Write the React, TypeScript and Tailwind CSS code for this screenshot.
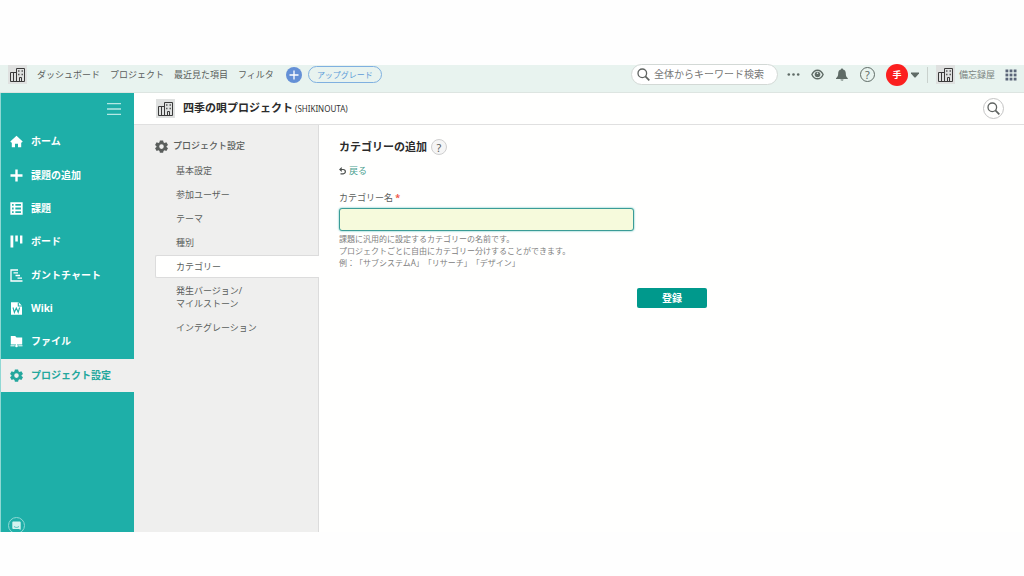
import { useState, type ReactNode } from "react";

type NavItem = { label: string; icon: ReactNode };

const globalLinks = ["ダッシュボード", "プロジェクト", "最近見た項目", "フィルタ"];

const projectNav: NavItem[] = [
  { label: "ホーム", icon: <HomeIcon /> },
  { label: "課題の追加", icon: <AddIcon /> },
  { label: "課題", icon: <IssuesIcon /> },
  { label: "ボード", icon: <BoardIcon /> },
  { label: "ガントチャート", icon: <GanttIcon /> },
  { label: "Wiki", icon: <WikiIcon /> },
  { label: "ファイル", icon: <FileIcon /> },
  { label: "プロジェクト設定", icon: <GearIcon /> },
];

const settingsNav = [
  "基本設定",
  "参加ユーザー",
  "テーマ",
  "種別",
  "カテゴリー",
  "発生バージョン/\nマイルストーン",
  "インテグレーション",
];

export default function App() {
  return (
    <div className="flex min-h-screen flex-col bg-[#fefefe] pt-[65px] pb-11 [font-family:'Noto_Sans','Open_Sans','Noto_Sans_CJK_JP',sans-serif] text-[9px] text-[#5a5e5c] [text-spacing-trim:space-all]">
      <GlobalHeader />
      <div className="flex flex-1">
        <Sidebar />
        <div className="flex min-w-0 flex-1 flex-col">
          <ProjectHeader />
          <div className="flex flex-1">
            <SettingsNav />
            <CategoryForm />
          </div>
        </div>
      </div>
    </div>
  );
}

function GlobalHeader() {
  return (
    <header className="flex h-7 items-center border-b border-[#dde5e1] bg-[#e8f3ef] pr-[7px] pb-2 pl-2">
      <Logo />
      <nav className="ml-2.5 flex items-center gap-2.5 whitespace-nowrap">
        {globalLinks.map((label) => (
          <a key={label} href="#">
            {label}
          </a>
        ))}
      </nav>
      <button aria-label="追加" className="ml-3 size-4 shrink-0 rounded-full bg-[#6490d6]">
        <svg viewBox="0 0 16 16" className="size-4" stroke="#fff" strokeWidth="1.3">
          <path d="M8 3.500v9M3.500 8h9" />
        </svg>
      </button>
      <a
        href="#"
        className="ml-1.5 flex h-[17px] items-center rounded-full border border-[#7fb0e0] px-2 text-[8px] whitespace-nowrap text-[#5c9bd8]"
      >
        アップグレード
      </a>

      <label className="ml-auto flex h-[21px] w-[147px] items-center gap-1 rounded-full border border-[#d3d9d6] bg-white pl-[5px]">
        <SearchIcon className="size-[13px] shrink-0" />
        <input
          type="search"
          aria-label="キーワード検索"
          placeholder="全体からキーワード検索"
          className="w-full min-w-0 text-[10px] outline-none placeholder:text-[#777]"
        />
      </label>
      <button aria-label="その他" className="ml-[9px]">
        <svg viewBox="0 0 13 13" className="size-[13px]" fill="#5f6b66">
          <circle cx="1.8" cy="6.5" r="1.3" />
          <circle cx="6.5" cy="6.5" r="1.3" />
          <circle cx="11.2" cy="6.5" r="1.3" />
        </svg>
      </button>
      <button aria-label="ウォッチ" className="ml-[11px]">
        <svg viewBox="0 0 13 13" className="size-[13px]" fill="none" stroke="#5f6b66" strokeWidth="1.4">
          <path d="M.9 6.5C2 4 4 2.200 6.5 2.200S11 4 12.1 6.5C11 9 9 10.800 6.5 10.800S2 9 .9 6.5Z" />
          <circle cx="6.5" cy="6.5" r="2.8" fill="#5f6b66" stroke="none" />
          <circle cx="6.5" cy="5.2" r=".8" fill="#e8f3ef" stroke="none" />
        </svg>
      </button>
      <button aria-label="お知らせ" className="ml-3">
        <svg viewBox="0 0 12 13" className="h-[13px] w-3" fill="#5f6b66">
          <path d="M6 .4c.7 0 1.1.5 1.1 1.1C8.900 2 9.800 3.400 9.800 5.200c0 2.600.5 3.800 2 5v.9H0v-.9c1.500-1.200 2.200-2.400 2.200-5 0-1.800.9-3.200 2.700-3.700C4.900.9 5.300.4 6 .4ZM4.500 11.500h3c-.1.800-.7 1.200-1.500 1.200s-1.400-.4-1.500-1.200Z" />
        </svg>
      </button>
      <button
        aria-label="ヘルプ"
        className="ml-3 flex size-[15px] items-center justify-center rounded-full border border-[#5f6b66] text-[11px] leading-none text-[#5f6b66]"
      >
        ?
      </button>
      <button aria-label="アカウント" className="ml-[11px] flex items-center gap-[3px]">
        <span className="flex size-[22px] items-center justify-center rounded-full bg-[#fb1f1f] font-bold text-white">
          手
        </span>
        <svg viewBox="0 0 8 6" className="h-1.5 w-2" fill="#5f6b66">
          <path d="M0 .5h8v1L4.500 5.500h-1L0 1.500z" />
        </svg>
      </button>
      <span className="mx-2 h-4 w-px bg-[#c9d1cd]" />
      <a href="#" className="flex items-center gap-1 whitespace-nowrap text-[#7b8380]">
        <Logo />
        備忘録屋
      </a>
      <button aria-label="アプリ一覧" className="ml-2.5">
        <svg viewBox="0 0 12 12" className="size-3" fill="#5a6578">
          {[0.5, 4.6, 8.7].map((y) => [0.5, 4.6, 8.7].map((x) => <rect key={`${x}-${y}`} x={x} y={y} width="2.8" height="2.8" />))}
        </svg>
      </button>
    </header>
  );
}

function Sidebar() {
  const [collapsed, setCollapsed] = useState(false);

  return (
    <aside className="flex w-[134px] shrink-0 flex-col overflow-hidden border-l border-[#8fd8d3] bg-[#1eafa8] text-[10px] font-bold text-white">
      <div className="flex h-8 items-center justify-end pr-[13px]">
        <button aria-label="メニュー" aria-expanded={!collapsed} onClick={() => setCollapsed(!collapsed)}>
          <svg viewBox="0 0 14 14" className="size-3.5" stroke="#b5e8e4" strokeWidth="1.3">
            <path d="M0 1.700h14M0 7h14M0 12.300h14" />
          </svg>
        </button>
      </div>
      {!collapsed && (
        <nav className="grid h-[267px] grid-rows-8">
          {projectNav.map(({ label, icon }) => (
            <a
              key={label}
              href="#"
              className={`flex items-center gap-2 pl-[9px] ${label === "プロジェクト設定" ? "bg-[#efefee] text-[#23a79d]" : ""}`}
            >
              {icon}
              {label}
            </a>
          ))}
        </nav>
      )}
      <button
        aria-label="チャット"
        className="mt-auto -mb-0.5 ml-[7px] flex size-[17px] items-center justify-center rounded-full border border-[#8fdad5]"
      >
        <svg viewBox="0 0 9 9" className="size-[9px]">
          <path d="M1.200.5h6.600c.5 0 .9.400.9.900v7.400L6.800 8H1.200C.7 8 .3 7.600.3 7.100V1.400C.3.900.7.500 1.200.5Z" fill="#d3f3f0" />
          <path d="M2 5.500c1.500 1.200 3.500 1.200 5 0" fill="none" stroke="#1eafa8" strokeWidth=".7" />
        </svg>
      </button>
    </aside>
  );
}

function ProjectHeader() {
  return (
    <div className="flex h-8 items-center border-b border-[#e0e0e0] bg-[#fffffe] pr-5 pl-[22px]">
      <Logo />
      <span className="ml-2 text-[11px] font-bold text-[#2b2b2b]">四季の唄プロジェクト</span>
      <span className="ml-0.5 text-[8px] text-[#333]">(SHIKINOUTA)</span>
      <button
        aria-label="検索"
        className="ml-auto flex size-[21px] items-center justify-center rounded-full border border-[#c4c4c4]"
      >
        <SearchIcon className="size-[13px]" />
      </button>
    </div>
  );
}

function SettingsNav() {
  return (
    <div className="w-[185px] shrink-0 border-r border-[#dcdcdc] bg-[#efefee] pt-3 pl-[21px]">
      <h2 className="flex h-[18px] items-center gap-[5px] font-medium">
        <GearIcon />
        プロジェクト設定
      </h2>
      <nav className="mt-1 -mr-px flex flex-col gap-px">
        {settingsNav.map((label) => (
          <a
            key={label}
            href="#"
            className={`rounded-l-xs border-y border-l py-1 pl-5 leading-[13px] whitespace-pre-line ${
              label === "カテゴリー" ? "border-[#dcdcdc] bg-[#fffffe]" : "border-transparent"
            }`}
          >
            {label}
          </a>
        ))}
      </nav>
    </div>
  );
}

function CategoryForm() {
  const [name, setName] = useState("");

  return (
    <main className="min-w-0 flex-1 bg-[#fffffe] pt-3.5 pl-5">
      <div className="flex h-4 items-center gap-1">
        <h1 className="text-[11px] font-bold text-[#2b2b2b]">カテゴリーの追加</h1>
        <button
          aria-label="ヘルプ"
          className="flex size-4 items-center justify-center rounded-full border border-[#cfcfcf] bg-[#f5f5f5] text-[11px] leading-none"
        >
          ?
        </button>
      </div>
      <a href="#" className="mt-2 inline-flex h-4 items-center gap-[3px] text-[#4a9f90]">
        <svg viewBox="0 0 7 8" className="h-2 w-[7px]" fill="none" stroke="#4b4f4d" strokeWidth="1.200">
          <path d="M1 2.500h3.200a2.100 2.100 0 0 1 0 4.300H1.500M2.800.6.900 2.500l1.900 1.900" />
        </svg>
        戻る
      </a>
      <form className="mt-3 flex max-w-[368px] flex-col" onSubmit={(e) => e.preventDefault()}>
        <label htmlFor="category-name" className="leading-[14px]">
          カテゴリー名 <span className="font-bold text-[#f0594a]">*</span>
        </label>
        <input
          id="category-name"
          required
          value={name}
          onChange={(e) => setName(e.target.value)}
          className="mt-[3px] h-[23px] w-full max-w-[295px] rounded-[3px] border border-[#3b9c97] bg-[#f6fadc] px-1.5 shadow-[0_0_2px_#3fb5ae] outline-none"
        />
        <p className="mt-0.5 text-[8px] leading-3 text-[#808080]">
          課題に汎用的に設定するカテゴリーの名前です。
          <br />
          プロジェクトごとに自由にカテゴリー分けすることができます。
          <br />
          例：「サブシステムA」「リサーチ」「デザイン」
        </p>
        <button className="mt-[19px] h-5 w-[70px] self-end rounded-xs bg-[#00998c] text-[10px] leading-none font-bold text-white">
          登録
        </button>
      </form>
    </main>
  );
}

/* Icons */

function Logo() {
  return (
    <span className="flex size-[19px] shrink-0 items-center justify-center bg-[#dfe1e0]">
      <svg viewBox="0 0 17 17" className="size-[17px]" fill="none" stroke="#3a3a3a" strokeWidth="1">
        <path d="M7.500 15.500v-13h8v13h-14v-9h6M4.500 7v2M4.500 9v6M10.500 15.500v-4h2v4" />
        <path d="M9.200 5h1.200M12.600 5h1.200M9.200 8.500h1.200M12.600 8.500h1.200" strokeWidth="1.300" />
      </svg>
    </span>
  );
}

function SearchIcon({ className }: { className: string }) {
  return (
    <svg viewBox="0 0 13 13" className={className} fill="none" stroke="#5f6361" strokeWidth="1.300">
      <circle cx="5.300" cy="5.300" r="4.300" />
      <path d="m8.400 8.400 3.900 3.900" strokeWidth="1.700" />
    </svg>
  );
}

function HomeIcon() {
  return (
    <svg viewBox="0 0 13 13" className="size-[13px]" fill="currentColor">
      <path d="M6.500.8 12.700 6.600l-.8.900h-.7v4.700H8V8.700H5v3.500H1.800V7.500h-.7l-.8-.9z" />
    </svg>
  );
}

function AddIcon() {
  return (
    <svg viewBox="0 0 13 13" className="size-[13px]" stroke="currentColor" strokeWidth="2.400">
      <path d="M6.500.5v12M.5 6.500h12" />
    </svg>
  );
}

function IssuesIcon() {
  return (
    <svg viewBox="0 0 13 13" className="size-[13px]" fill="none" stroke="currentColor" strokeWidth="1.700">
      <path d="M1.200 1.200h10.600v10.600H1.200zM4.500 1.200v10.600M1 4.700h11M1 8.300h11" />
    </svg>
  );
}

function BoardIcon() {
  return (
    <svg viewBox="0 0 13 13" className="size-[13px]" fill="currentColor">
      <path d="M.5.5h2.800v12H.5zM5.300.5h2.500v6H5.300zM10 .5h2.400v8H10z" />
    </svg>
  );
}

function GanttIcon() {
  return (
    <svg viewBox="0 0 13 13" className="size-[13px]" fill="none" stroke="currentColor" strokeWidth="1.300">
      <path d="M8 1H1v11h11.500M3.500 3.800H8M5.500 6.500H10M7.500 9.200H12" />
    </svg>
  );
}

function WikiIcon() {
  return (
    <svg viewBox="0 0 13 13" className="size-[13px]">
      <path d="M1 .3h7.500L12 3.800v8.900H1z" fill="currentColor" />
      <path d="M8.300.5V4H12M3 5.500l1.400 4.800 1.900-4.300 1.900 4.300 1.400-4.800" fill="none" stroke="#1eafa8" strokeWidth="1.100" />
    </svg>
  );
}

function FileIcon() {
  return (
    <svg viewBox="0 0 13 13" className="size-[13px]" fill="currentColor">
      <path d="M.8 1h4.400l1.300 1.400h5.700v7H.8z" />
      <path d="M.5 10.800h4.200M8.300 10.800h4.200M6.500 9v1" stroke="currentColor" strokeWidth="1" />
      <circle cx="6.500" cy="11" r="1.300" />
    </svg>
  );
}

function GearIcon() {
  return (
    <svg viewBox="0 0 24 24" className="size-[13px]" fill="currentColor">
      <path
        fillRule="evenodd"
        d="M9 .8h6l.7 3.500 1.900 1.100 3.400-1.200 3 5.200-2.700 2.300v1l2.700 2.300-3 5.200-3.400-1.200-1.900 1.100-.7 3.500H9l-.7-3.500-1.900-1.100L3 20.200.1 15l2.600-2.300v-1L.1 9.400 3 4.200l3.400 1.200 1.900-1.100zM12 8a4.200 4.200 0 1 0 0 8.400A4.200 4.200 0 0 0 12 8z"
      />
    </svg>
  );
}
